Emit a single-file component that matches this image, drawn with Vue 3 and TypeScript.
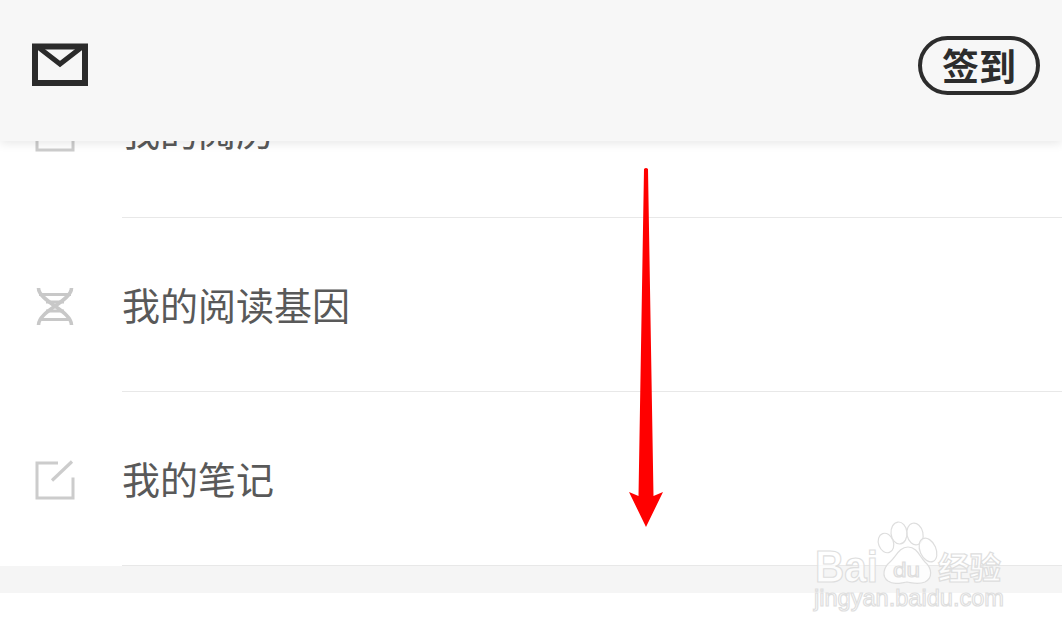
<template>
  <div class="page">
    <header class="top">
      <svg class="mail" width="56" height="44" viewBox="0 0 56 44">
        <rect x="3" y="3.5" width="50" height="36.5" fill="none" stroke="#2b2b2b" stroke-width="6" />
        <path d="M6 4 L28 21 L50 4" fill="none" stroke="#2b2b2b" stroke-width="5" />
      </svg>
      <div class="sign">签到</div>
    </header>

    <ul class="list">
      <li v-for="row in rows" :key="row.title" class="row">
        <span class="icon">
          <svg v-if="row.icon === 'history'" width="40" height="40" viewBox="0 0 40 40">
            <rect x="2" y="2" width="36" height="36" fill="none" stroke="#ccc" stroke-width="3" />
          </svg>
          <svg v-else-if="row.icon === 'dna'" width="40" height="40" viewBox="0 0 40 40">
            <path d="M3.5 2 C3.5 15 36.5 25 36.5 39 M36.5 2 C36.5 15 3.5 25 3.5 39" fill="none" stroke="#c8c8c8" stroke-width="3.6" />
            <path d="M4 8.5 H36 M11 16 H29 M11 25 H29 M4 33.5 H36" fill="none" stroke="#c8c8c8" stroke-width="3" />
          </svg>
          <svg v-else width="40" height="40" viewBox="0 0 40 40">
            <path d="M23 3 H2 V38 H38 V17.5" fill="none" stroke="#ccc" stroke-width="3" />
            <path d="M17 20.5 L37 1.5" fill="none" stroke="#ccc" stroke-width="3.2" />
          </svg>
        </span>
        <span class="title">{{ row.title }}</span>
      </li>
    </ul>

    <div class="band"></div>

    <svg class="arrow" width="40" height="365" viewBox="0 0 40 365">
      <path d="M18 2 Q20 0 22 2 L27.5 329 L37 325 L20 360 L3 325 L12.5 329 Z" fill="#ff0000" />
    </svg>

    <svg class="mark" width="200" height="100" viewBox="0 0 200 100">
      <g fill="#ffffff" fill-opacity="0.75" stroke="#dedede" stroke-width="1.2">
        <ellipse cx="71" cy="18" rx="7.5" ry="10" transform="rotate(-20 71 18)" />
        <ellipse cx="84" cy="8" rx="8" ry="11" transform="rotate(-6 84 8)" />
        <ellipse cx="100" cy="9" rx="8" ry="11" transform="rotate(-12 100 9)" />
        <ellipse cx="113" cy="25" rx="8" ry="12.5" transform="rotate(-24 113 25)" />
        <path d="M93 22 C102 22 105 32 110 37 C117 43 118 53 110 57 C103 60 98 58 92 57 C85 58 79 60 73 56 C66 51 69 42 75 37 C81 32 84 22 93 22 Z" />
        <text x="0" y="57" class="mark-latin" font-size="45" textLength="63" lengthAdjust="spacingAndGlyphs">Bai</text>
        <text x="78" y="52" class="mark-du" font-size="21" textLength="27" lengthAdjust="spacingAndGlyphs">du</text>
        <text x="123" y="54" class="mark-cn" font-size="31" textLength="63" lengthAdjust="spacingAndGlyphs">经验</text>
        <text x="-1" y="81" class="mark-url" font-size="24" textLength="190" lengthAdjust="spacingAndGlyphs">jingyan.baidu.com</text>
      </g>
    </svg>
  </div>
</template>

<script setup lang="ts">
interface Row {
  title: string
  icon: 'history' | 'dna' | 'note'
}

const rows: Row[] = [
  { title: '我的阅历', icon: 'history' },
  { title: '我的阅读基因', icon: 'dna' },
  { title: '我的笔记', icon: 'note' }
]
</script>

<style scoped>
.page {
  position: relative;
  width: 1062px;
  height: 636px;
  overflow: hidden;
  background: #fff;
  font-family: "Noto Sans CJK SC", "Noto Sans", sans-serif;
}

.top {
  position: relative;
  z-index: 1;
  height: 141px;
  display: flex;
  align-items: center;
  justify-content: space-between;
  padding: 0 22px 0 32px;
  background: #f7f7f7;
  box-shadow: 0 2px 10px rgba(0, 0, 0, 0.1);
}

.mail {
  margin-top: -11px;
}

.sign {
  width: 122px;
  height: 59px;
  box-sizing: border-box;
  display: flex;
  align-items: center;
  justify-content: center;
  margin-top: -11px;
  border: 4px solid #2d2d2d;
  border-radius: 30px;
  color: #2d2d2d;
  font-size: 37px;
  font-weight: 700;
  line-height: 1;
}

.list {
  list-style: none;
  margin: -97px 0 0;
  padding: 0;
}

.row {
  display: flex;
  align-items: center;
  height: 174px;
  box-sizing: border-box;
}

.icon {
  flex: none;
  width: 122px;
  padding: 2px 0 0 35px;
  box-sizing: border-box;
  display: flex;
}

.title {
  flex: 1;
  height: 100%;
  display: flex;
  align-items: center;
  padding-bottom: 3px;
  box-sizing: border-box;
  border-bottom: 1px solid #e8e8e8;
  color: #595959;
  font-size: 38px;
}

.band {
  height: 27px;
  background: #f5f5f5;
}

.arrow {
  position: absolute;
  left: 626px;
  top: 167px;
  z-index: 2;
}

.mark {
  position: absolute;
  left: 815px;
  top: 525px;
  z-index: 2;
  overflow: visible;
}

.mark-latin {
  font-family: "Liberation Sans", sans-serif;
  font-weight: 700;
}

.mark-du,
.mark-url {
  font-family: "Liberation Sans", sans-serif;
}

.mark-cn {
  font-family: "Noto Sans CJK SC", sans-serif;
  font-weight: 700;
}
</style>
